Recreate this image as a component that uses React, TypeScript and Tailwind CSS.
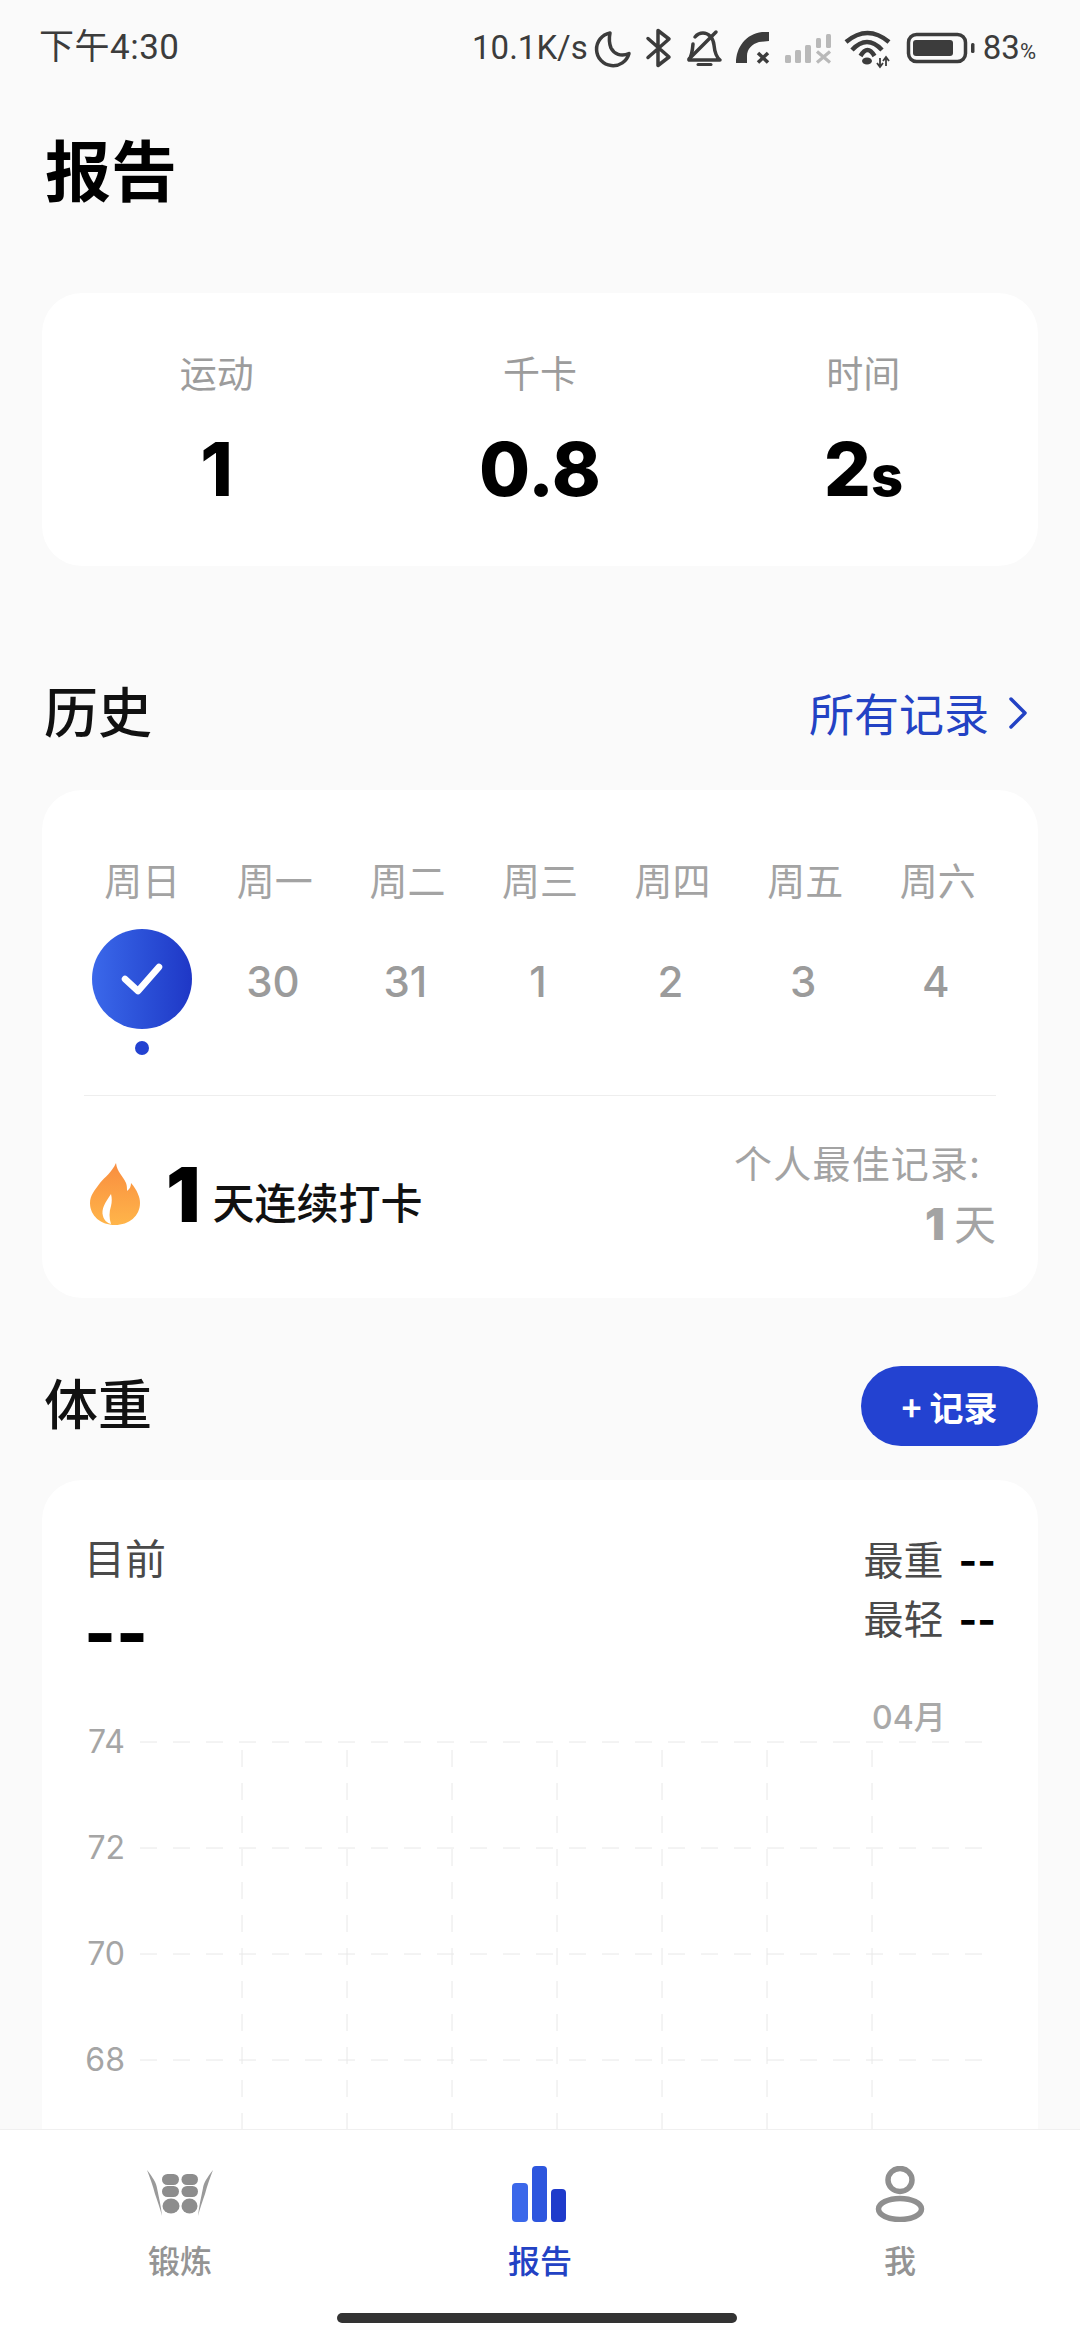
const CJK = "font-['Noto_Sans_CJK_SC',sans-serif]";
const NUM = "font-['Inter','Noto_Sans_CJK_SC',sans-serif]";

const WEEK = ['周日', '周一', '周二', '周三', '周四', '周五', '周六'];
const DAYS = ['', '30', '31', '1', '2', '3', '4'];
const GRID_Y = [{ y: 62, label: '74' }, { y: 168, label: '72' }, { y: 274, label: '70' }, { y: 380, label: '68' }];
const GRID_X = [200, 305, 410, 515, 620, 725, 830];

function StatusIcons() {
  return (
    <svg width="384" height="56" viewBox="0 0 384 56" className="shrink-0">
      {/* moon */}
      <path d="M16 13A16.500 16.500 0 1 0 35 33.500C27 37 20 34 17 28C15 23 15 18 16 13z" fill="none" stroke="#3c3c3c" strokeWidth="3.500" strokeLinejoin="round" />
      {/* bluetooth */}
      <path d="M54 18.500L75 37L64 45.500V10.500L75 19L54 37.500" fill="none" stroke="#3c3c3c" strokeWidth="3.500" strokeLinejoin="round" strokeLinecap="round" />
      {/* bell off */}
      <path d="M95 40H126C121 36 120.500 30 120 25C119 17 114 13 109 13C106 13 103 14.500 101 17M99 24C98.500 30 98 36 95 40" fill="none" stroke="#3c3c3c" strokeWidth="3.500" strokeLinejoin="round" strokeLinecap="round" />
      <path d="M95 39L122 12" stroke="#3c3c3c" strokeWidth="3.500" strokeLinecap="round" />
      <path d="M104 44.500h13" stroke="#3c3c3c" strokeWidth="3" strokeLinecap="round" />
      {/* missed call */}
      <path d="M142 43H153V36C153 29 158 24 165 22L175 21V12H168C152 14 142 27 142 43z" fill="#3c3c3c" />
      <path d="M164 33l10 9.500M174 33l-10 9.500" stroke="#3c3c3c" strokeWidth="3.500" />
      {/* signal */}
      <g fill="#b9b9b9">
        <rect x="191" y="35" width="6" height="8" rx="1.500" />
        <rect x="201" y="30" width="6" height="13" rx="1.500" />
        <rect x="211" y="25" width="6" height="18" rx="1.500" />
        <rect x="222" y="18" width="5" height="10" rx="1.500" />
        <rect x="232" y="14" width="5" height="14" rx="1.500" />
      </g>
      <path d="M223 31.500l13 11M236 31.500l-13 11" stroke="#b9b9b9" strokeWidth="3.200" />
      {/* wifi */}
      <path d="M252 22Q273.500 4 295 22M258 30Q273 14 288 30M266.500 36Q273.500 24 280.500 36" fill="none" stroke="#3c3c3c" strokeWidth="4.500" />
      <ellipse cx="273" cy="41" rx="5" ry="3.500" fill="#3c3c3c" />
      <path d="M286 38v9M292 37v9M283 43l3 4 3-4M289 41l3-4 3 4" fill="none" stroke="#3c3c3c" strokeWidth="1.800" />
      {/* battery */}
      <rect x="314.500" y="14.500" width="57" height="27" rx="8" fill="none" stroke="#3c3c3c" strokeWidth="3.500" />
      <rect x="319" y="20" width="40" height="16" rx="3" fill="#3c3c3c" />
      <rect x="377" y="23" width="3.500" height="10" rx="1.500" fill="#3c3c3c" />
    </svg>
  );
}

function StatusBar() {
  return (
    <div className="h-[96px] shrink-0 flex items-center justify-between pl-[39px] pr-[44px] text-[#3c3c3c]">
      <span className="text-[35px] font-['Roboto','Noto_Sans_CJK_SC',sans-serif] tracking-[0.5px]">下午4:30</span>
      <div className="flex items-center font-['Roboto',sans-serif]">
        <span className="text-[33px] mr-[6px]">10.1K/s</span>
        <StatusIcons />
        <span className="text-[33px] ml-[5px]">83<span className="text-[22px]">%</span></span>
      </div>
    </div>
  );
}

function StatCol({ label, children }: { label: string; children: React.ReactNode }) {
  return (
    <div className="flex flex-col items-center">
      <span className={`text-[37px] leading-[50px] text-[#9c9c9c] ${CJK}`}>{label}</span>
      <span className={`mt-[27px] text-[74px] leading-[90px] font-extrabold text-black ${NUM}`}>{children}</span>
    </div>
  );
}

function Calendar() {
  return (
    <div className="bg-white rounded-[40px] h-[508px] pt-[62px] px-[42px] flex flex-col">
      <div className="grid grid-cols-7 -mx-[8px]">
        {WEEK.map((d) => (
          <div key={d} className={`text-center text-[38px] leading-[54px] text-[#a3a3a3] ${CJK}`}>{d}</div>
        ))}
      </div>
      <div className="grid grid-cols-7 -mx-[8px] mt-[23px] h-[100px] items-center">
        {DAYS.map((d, i) => (
          <div key={i} className={`flex justify-center text-[42px] font-medium text-[#9b9b9b] ${NUM}`}>
            {i === 0 ? (
              <div className="relative w-[100px] h-[100px] rounded-full bg-gradient-to-r from-[#3b68ea] to-[#1f37c6] flex items-center justify-center">
                <svg width="44" height="36" viewBox="0 0 44 36">
                  <path d="M5 18l13 12L39 6" fill="none" stroke="#fff" strokeWidth="6.500" strokeLinecap="round" strokeLinejoin="round" />
                </svg>
                <div className="absolute top-[112px] left-[43px] w-[14px] h-[14px] rounded-full bg-[#2342d1]" />
              </div>
            ) : (
              <span className="pt-[5px] pr-[4px]">{d}</span>
            )}
          </div>
        ))}
      </div>
      <div className="mt-[66px] h-px bg-[#eeeeee]" />
      <div className="flex justify-between pt-[38px]">
        <div className="flex items-center h-[120px] pl-[6px]">
          <svg width="50" height="62" viewBox="0 0 50 62">
            <defs>
              <linearGradient id="flame" x1="0" y1="0" x2="0" y2="1">
                <stop offset="0" stopColor="#f98d3f" />
                <stop offset="1" stopColor="#ffb54a" />
              </linearGradient>
            </defs>
            <path d="M26 0c1 9 7 13 10 20 1 3 1 5 1 8 3-2 4-5 4-8 6 7 9 14 9 20 0 13-11 22-25 22S0 53 0 40c0-8 5-13 10-20 5-6 12-11 16-20zM21 31c-6 9-10 15-8 22 1 4 4 7 8 8-2-6-2-12 0-18 1-4 1-8 0-12z" fill="url(#flame)" fillRule="evenodd" />
          </svg>
          <span className={`ml-[26px] text-[76px] leading-none font-black text-black ${NUM}`}>1</span>
          <span className={`ml-[12px] mt-[12px] text-[42px] font-medium text-[#111] ${CJK}`}>天连续打卡</span>
        </div>
        <div className="flex flex-col items-end text-[#a3a3a3]">
          <span className={`text-[38px] leading-[56px] pr-[15px] tracking-[1.2px] ${CJK}`}>个人最佳记录:</span>
          <span className={`mt-[3px] text-[42px] leading-[58px] flex items-baseline gap-[9px] ${CJK}`}>
            <span className={`text-[44px] font-black ${NUM}`}>1</span>天
          </span>
        </div>
      </div>
    </div>
  );
}

function WeightChart() {
  return (
    <svg width="996" height="460" viewBox="0 0 996 460" className="block shrink-0 mt-[26px]">
      {GRID_Y.map((g) => (
        <g key={g.label}>
          <line x1="98" x2="940" y1={g.y} y2={g.y} stroke="#e8e8e8" strokeWidth="1" strokeDasharray="17 16" />
          <text x="83" y={g.y + 11} textAnchor="end" fontSize="32" fill="#a5a5a5" fontFamily="Inter">{g.label}</text>
        </g>
      ))}
      {GRID_X.map((x) => (
        <line key={x} x1={x} x2={x} y1="70" y2="460" stroke="#e8e8e8" strokeWidth="1" strokeDasharray="17 16" />
      ))}
      <text x="830" y="49" textAnchor="start" fontSize="32" fontWeight="500" fill="#a9a9a9" fontFamily="Inter, 'Noto Sans CJK SC'">04月</text>
    </svg>
  );
}

function BottomNav() {
  return (
    <div className="h-[211px] shrink-0 bg-white border-t border-[#f0f0f0] relative">
      <div className="grid grid-cols-3 pt-[36px]">
        <div className="flex flex-col items-center">
          <svg width="66" height="56" viewBox="0 0 66 56">
            <path d="M0 4C6 12 9 16 10 22C12 32 14 40 15 50C13 42 10 34 8 28C6 20 3 12 0 4zM66 4C60 12 57 16 56 22C54 32 52 40 51 50C53 42 56 34 58 28C60 20 63 12 66 4z" fill="#9a9a9a" />
            <g fill="#8d8d8d">
              <rect x="15" y="8" width="17" height="11" rx="5.500" /><rect x="34.500" y="8" width="16.500" height="11" rx="5.500" />
              <rect x="15" y="20" width="17" height="11" rx="5.500" /><rect x="34.500" y="20" width="16.500" height="11" rx="5.500" />
              <ellipse cx="24" cy="40" rx="8.500" ry="7.500" /><ellipse cx="42.500" cy="40" rx="8" ry="7.500" />
            </g>
          </svg>
          <span className={`mt-[13px] text-[32px] font-medium text-[#949494] ${CJK}`}>锻炼</span>
        </div>
        <div className="flex flex-col items-center">
          <svg width="56" height="56" viewBox="0 0 56 56">
            <rect x="0" y="17" width="16" height="39" rx="4" fill="#3b68ea" />
            <rect x="20" y="0" width="15" height="56" rx="4" fill="#2d56de" />
            <rect x="39" y="23" width="15" height="33" rx="4" fill="#1f3bcb" />
          </svg>
          <span className={`mt-[13px] text-[32px] font-medium text-[#2342c4] ${CJK}`}>报告</span>
        </div>
        <div className="flex flex-col items-center">
          <svg width="50" height="56" viewBox="0 0 50 56">
            <ellipse cx="25" cy="14" rx="12" ry="11.500" fill="none" stroke="#8f8f8f" strokeWidth="5.500" />
            <ellipse cx="25" cy="43" rx="21.500" ry="10.500" fill="none" stroke="#8f8f8f" strokeWidth="5.500" />
          </svg>
          <span className={`mt-[13px] text-[32px] font-medium text-[#949494] ${CJK}`}>我</span>
        </div>
      </div>
      <div className="absolute left-[337px] top-[183px] w-[400px] h-[10px] rounded-full bg-[#333]" />
    </div>
  );
}

export default function App() {
  return (
    <div className={`w-[1080px] h-[2340px] bg-[#fafafa] flex flex-col overflow-hidden ${CJK}`}>
      <StatusBar />
      <div className="flex-1 min-h-0 overflow-hidden px-[42px]">
        <h1 className="pl-[3px] mt-[29px] text-[66px] leading-[84px] font-bold text-black">报告</h1>
        <div className="mt-[84px] bg-white rounded-[40px] h-[273px] grid grid-cols-3 pt-[54px] px-[13px]">
          <StatCol label="运动">1</StatCol>
          <StatCol label="千卡">0.8</StatCol>
          <StatCol label="时间">2<span className="text-[56px]">s</span></StatCol>
        </div>
        <div className="mt-[108px] flex items-center justify-between h-[78px]">
          <h2 className="pl-[2px] -mt-[8px] text-[54px] font-medium text-[#111]">历史</h2>
          <button className="flex items-center text-[45px] text-[#2342c4] pr-[8px]">
            所有记录
            <svg width="22" height="34" viewBox="0 0 22 34" className="ml-[19px]">
              <path d="M3 3l14 14L3 31" fill="none" stroke="#2342c4" strokeWidth="3.500" strokeLinecap="round" strokeLinejoin="round" />
            </svg>
          </button>
        </div>
        <div className="mt-[38px]">
          <Calendar />
        </div>
        <div className="mt-[68px] flex items-center justify-between h-[80px]">
          <h2 className="pl-[2px] -mt-[10px] text-[54px] font-medium text-[#111]">体重</h2>
          <button className="w-[177px] h-[80px] rounded-full bg-[#2342d1] text-white text-[34px] font-bold">+ 记录</button>
        </div>
        <div className="mt-[34px] bg-white rounded-[40px] h-[700px]">
          <div className="flex justify-between h-[174px] pt-[50px] pl-[42px] pr-[42px]">
            <div>
              <div className="text-[41px] leading-[52px] text-[#4a4a4a]">目前</div>
              <div className={`mt-[15px] text-[68px] leading-[72px] font-extrabold text-black ${NUM}`}>--</div>
            </div>
            <div className="text-[40px] leading-[56px] text-[#4a4a4a] text-right">
              <div>最重 <span className={`ml-[6px] font-bold text-black ${NUM}`}>--</span></div>
              <div>最轻 <span className={`ml-[6px] font-bold text-black ${NUM}`}>--</span></div>
            </div>
          </div>
          <WeightChart />
        </div>
      </div>
      <BottomNav />
    </div>
  );
}
